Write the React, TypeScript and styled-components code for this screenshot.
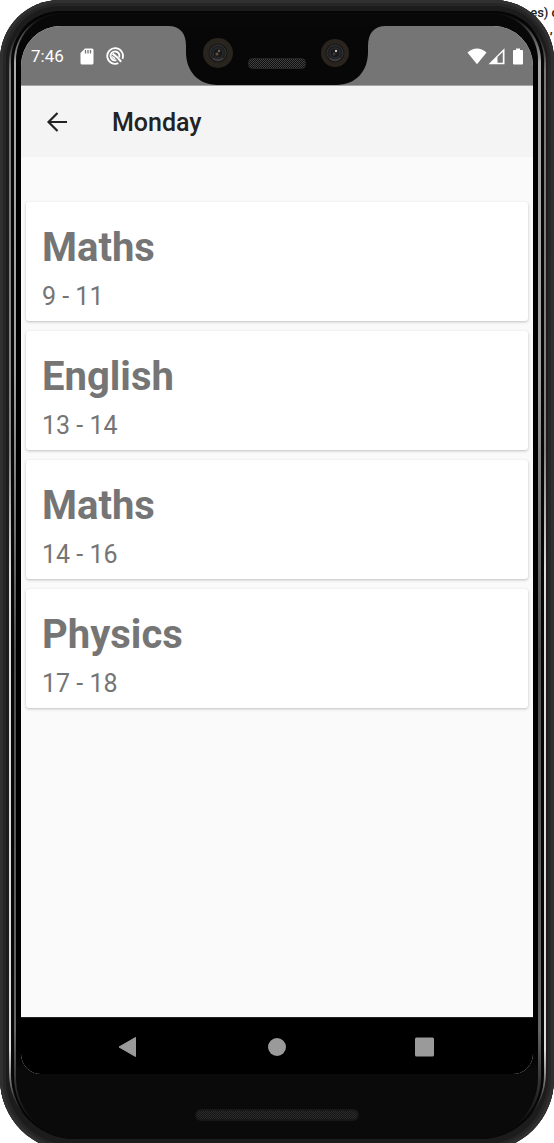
import React from "react";
import styled, { createGlobalStyle } from "styled-components";

const GlobalStyle = createGlobalStyle`
  * { box-sizing: border-box; }
  body {
    margin: 0;
    background: #ffffff;
    font-family: Roboto, "Liberation Sans", sans-serif;
  }
`;

const Page = styled.div`
  position: relative;
  height: 100vh;
  overflow: hidden;
`;

const Backdrop = styled.div`
  position: absolute;
  top: 5px;
  right: -5px;
  color: #222222;
  font-size: 13px;
  font-weight: 500;
  line-height: 16px;
  text-align: right;
`;

const Phone = styled.div`
  position: relative;
  display: flex;
  height: calc(100vh + 8px);
  padding: 11px 8px 12px 9px;
  border-radius: 60px 60px 72px 72px;
  background: #1c1c1c;
  box-shadow: inset 0 0 0 3px #303030, inset 0 0 0 6px #262626, inset 0 1px 1px 3px #444444;
`;

const Rim = styled.div`
  display: flex;
  flex: 1;
  padding: 0 2px;
  border-radius: 52px 52px 66px 66px;
  background: linear-gradient(
    #0a0a0a 0, #0a0a0a 12px, #777777 60px, #858585 440px, #dddddd 560px,
    #dddddd calc(100% - 90px), #0a0a0a calc(100% - 24px)
  );
`;

const Groove = styled.div`
  display: flex;
  flex: 1;
  padding: 2px 3px 0;
  border-radius: 50px 50px 64px 64px;
  background: #060606;
`;

const Band = styled.div`
  display: flex;
  flex: 1;
  padding: 1px 3px 1px 2px;
  border-radius: 48px 48px 62px 62px;
  background: linear-gradient(
    #0a0a0a 0, #161616 6px, #aaaaaa 50px, #a0a0a0 360px, #4c4c4c 640px,
    #666666 calc(100% - 110px), #0a0a0a calc(100% - 14px)
  );
`;

const Core = styled.div`
  display: flex;
  flex: 1;
  flex-direction: column;
  min-width: 0;
  padding: 12px 5px 0;
  border-radius: 46px 46px 60px 60px;
  background: linear-gradient(#080808 0, #080808 20px, #000000 60px, #000000 calc(100% - 90px), #0a0a0a calc(100% - 66px));
`;

const Screen = styled.div`
  display: flex;
  flex: 1;
  flex-direction: column;
  overflow: hidden;
  border-radius: 40px 40px 20px 20px;
  background: #fafafa;
`;

const StatusBar = styled.header`
  display: grid;
  grid-template-columns: 1fr 218px 1fr;
  height: 60px;
  background: #757575;
  border-bottom: 1px solid #a5a5a5;
`;

const StatusGroup = styled.div<{ $end?: boolean }>`
  display: flex;
  align-items: center;
  justify-content: ${(p) => (p.$end ? "flex-end" : "flex-start")};
  gap: ${(p) => (p.$end ? 0 : 12)}px;
  padding: 0 9px 0 10px;
  color: #ffffff;
`;

const Clock = styled.span`
  font-size: 17px;
  line-height: 20px;
  margin-right: 4px;
`;

const AppBar = styled.div`
  display: flex;
  align-items: center;
  gap: 35px;
  height: 71px;
  padding: 0 16px;
  background: #f4f4f4;
`;

const IconButton = styled.button`
  display: grid;
  place-items: center;
  width: 40px;
  height: 40px;
  padding: 0;
  border: 0;
  background: transparent;
  color: #222222;
`;

const Title = styled.h1`
  margin: 0;
  padding-top: 2px;
  color: #222222;
  font-size: 25px;
  font-weight: 500;
  line-height: 32px;
`;

const Lessons = styled.ul`
  display: flex;
  flex: 1;
  flex-direction: column;
  gap: 10px;
  margin: 0;
  padding: 45px 5px 0;
  list-style: none;
`;

const Card = styled.li`
  padding: 21px 16px 8px;
  border-radius: 3px;
  background: #ffffff;
  box-shadow: 0 1px 3px rgba(0, 0, 0, 0.24);
  color: #757575;
`;

const Subject = styled.h2`
  margin: 0;
  font-size: 40px;
  font-weight: 700;
  line-height: 50px;
`;

const Hours = styled.p`
  margin: 8px 0 0;
  font-size: 25px;
  line-height: 32px;
`;

const NavBar = styled.nav`
  display: flex;
  align-items: center;
  justify-content: center;
  gap: 108px;
  height: 57px;
  padding-top: 1px;
  border-top: 1px solid #222222;
  background: #000000;
`;

const NavButton = styled(IconButton)`
  color: #9a9a9a;
`;

const Chin = styled.div`
  display: flex;
  justify-content: center;
  height: 64px;
  padding-top: 35px;
`;

const lessons = [
  { subject: "Maths", hours: "9 - 11" },
  { subject: "English", hours: "13 - 14" },
  { subject: "Maths", hours: "14 - 16" },
  { subject: "Physics", hours: "17 - 18" },
];

const Mesh = ({ id, light, dark }: { id: string; light: string; dark: string }) => (
  <pattern id={id} width="2" height="2" patternUnits="userSpaceOnUse">
    <rect width="2" height="2" fill={dark} />
    <rect width="1" height="1" fill={light} />
    <rect x="1" y="1" width="1" height="1" fill={light} />
  </pattern>
);

const Camera = ({ x, r, warm }: { x: number; r: number; warm?: boolean }) => (
  <g transform={`translate(${x} 27)`}>
    <circle r={r} fill="#29241e" />
    <circle r="9.5" fill="#171615" />
    <circle r="8" fill="#1e1f21" stroke="#343436" strokeWidth="1" />
    <circle r="5" fill="#19191b" stroke="#303032" strokeWidth="1" />
    <path d="M-5 5 A7 7 0 0 0 5 5" fill="none" stroke="#4c4d52" strokeWidth="1" />
    <circle cx="-1" cy="1" r="1.5" fill={warm ? "#65503f" : "#3c3b3b"} />
    <circle cx="1" cy="-2" r="1.2" fill={warm ? "#6e6259" : "#c4c0ba"} />
  </g>
);

const Notch = () => (
  <svg width="218" height="60" viewBox="0 0 218 60" aria-hidden="true">
    <defs>
      <Mesh id="ear" light="#404040" dark="#101010" />
    </defs>
    <path
      d="M0 0 C12 0 18 7 18 20 V26 C18 45 30 59 50 59 H168 C188 59 200 45 200 26 V20 C200 7 206 0 218 0 Z"
      fill="#070707"
    />
    <Camera x={50} r={15} warm />
    <Camera x={167} r={14} />
    <rect x="80.5" y="32.5" width="57" height="10" rx="4" fill="url(#ear)" stroke="#242424" />
  </svg>
);

const SdCard = () => (
  <svg width="14" height="17" viewBox="0 0 14 17" aria-hidden="true">
    <path d="M5 0.5 H12 Q13.5 0.5 13.5 2 V15 Q13.5 16.500 12 16.500 H2 Q0.5 16.500 0.5 15 V5 Z" fill="currentColor" />
    <path d="M5.500 2 V5.500 M8 2 V5.500 M10.500 2 V5.500" stroke="#757575" strokeWidth="1.3" />
  </svg>
);

const Badge = () => (
  <svg width="18" height="18" viewBox="0 0 19 19" fill="none" stroke="currentColor" aria-hidden="true">
    <path d="M13 17 A8.300 8.300 0 1 1 17.300 12.500" strokeWidth="1.900" />
    <path d="M11 13.800 A4.700 4.700 0 1 1 13.900 11" strokeWidth="2" />
    <path d="M7 7 L12 11 L16 15.500" strokeWidth="2.200" />
    <path d="M6.500 10 L9.500 12.500" strokeWidth="1.600" />
  </svg>
);

const Wifi = () => (
  <svg width="21" height="17" viewBox="0 0 21 17" aria-hidden="true">
    <path d="M0.5 4.5 Q10 -3.300 19.500 4.500 L10 16.300 Z" fill="currentColor" />
  </svg>
);

const Signal = () => (
  <svg width="17" height="17" viewBox="0 0 17 17" aria-hidden="true">
    <path d="M0.5 16.200 L16.500 0.3 V16.200 Z M9.500 9 V14.700 H14.800 V4 Z" fill="currentColor" fillRule="evenodd" />
  </svg>
);

const Battery = styled.svg`
  margin-left: 7px;
`;

export default function App() {
  return (
    <Page>
      <GlobalStyle />
      <Backdrop aria-hidden="true">
        es) o
        <br />
        , &nbsp;
      </Backdrop>
      <Phone>
        <Rim>
          <Groove>
            <Band>
              <Core>
                <Screen>
                  <StatusBar>
                    <StatusGroup>
                      <Clock>7:46</Clock>
                      <SdCard />
                      <Badge />
                    </StatusGroup>
                    <Notch />
                    <StatusGroup $end>
                      <Wifi />
                      <Signal />
                      <Battery width="12" height="17" viewBox="0 0 12 17" aria-hidden="true">
                        <path d="M4 0.5 H8 V2 H10 Q11 2 11 3 V15.500 Q11 16.500 10 16.500 H2 Q1 16.500 1 15.500 V3 Q1 2 2 2 H4 Z" fill="#ffffff" />
                      </Battery>
                    </StatusGroup>
                  </StatusBar>
                  <AppBar>
                    <IconButton type="button" aria-label="Back">
                      <svg width="20" height="20" viewBox="0 0 20 20" fill="none" stroke="currentColor" strokeWidth="2.2" aria-hidden="true">
                        <path d="M20 10 H1.800 M10.500 1 L1.500 10 L10.500 19" />
                      </svg>
                    </IconButton>
                    <Title>Monday</Title>
                  </AppBar>
                  <Lessons>
                    {lessons.map((l) => (
                      <Card key={l.hours}>
                        <Subject>{l.subject}</Subject>
                        <Hours>{l.hours}</Hours>
                      </Card>
                    ))}
                  </Lessons>
                  <NavBar>
                    <NavButton type="button" aria-label="Go back">
                      <svg width="22" height="22" viewBox="0 0 22 22" aria-hidden="true">
                        <path d="M17.500 1.500 V20.500 L1 11 Z" fill="currentColor" stroke="currentColor" strokeLinejoin="round" />
                      </svg>
                    </NavButton>
                    <NavButton type="button" aria-label="Home">
                      <svg width="20" height="20" viewBox="0 0 20 20" aria-hidden="true">
                        <circle cx="10" cy="10" r="9" fill="currentColor" />
                      </svg>
                    </NavButton>
                    <NavButton type="button" aria-label="Recent apps">
                      <svg width="20" height="20" viewBox="0 0 20 20" aria-hidden="true">
                        <rect x="0" y="0.5" width="19" height="19" rx="1.500" fill="currentColor" />
                      </svg>
                    </NavButton>
                  </NavBar>
                </Screen>
                <Chin>
                  <svg width="164" height="12" viewBox="0 0 164 12" aria-hidden="true">
                    <defs>
                      <Mesh id="speaker" light="#2c2c2c" dark="#151515" />
                    </defs>
                    <rect x="1" y="1" width="162" height="10" rx="5" fill="url(#speaker)" stroke="#181818" strokeWidth="2" />
                  </svg>
                </Chin>
              </Core>
            </Band>
          </Groove>
        </Rim>
      </Phone>
    </Page>
  );
}
